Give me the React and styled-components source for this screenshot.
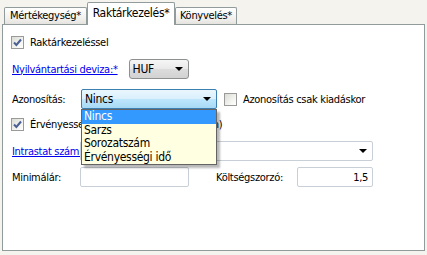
import React from 'react';
import styled, { createGlobalStyle } from 'styled-components';

const Global = createGlobalStyle`
  html, body { margin: 0; padding: 0; }
  body {
    background: #f4f3ee;
    font-family: "DejaVu Sans Condensed", "DejaVu Sans", sans-serif;
    font-size: 11px;
    letter-spacing: -0.3px;
    color: #000;
  }
`;

const Window = styled.div`
  width: 427px;
  height: 255px;
  box-sizing: border-box;
  padding: 0 2px;
  background: #f4f3ee;
  display: flex;
  flex-direction: column;
  overflow: hidden;
`;

const TabStrip = styled.div`
  height: 24px;
  display: flex;
  align-items: flex-end;
  padding-left: 2px;
  flex: none;
`;

const Tab = styled.div`
  box-sizing: border-box;
  width: ${p => p.$w}px;
  height: ${p => (p.$active ? 23 : 17)}px;
  margin-bottom: ${p => (p.$active ? -1 : 0)}px;
  position: relative;
  z-index: ${p => (p.$active ? 2 : 1)};
  padding-top: ${p => (p.$active ? 3 : 1)}px;
  text-align: center;
  border: 1px solid #919b9c;
  border-bottom: none;
  border-radius: 2px 2px 0 0;
  background: ${p => (p.$active ? '#fff' : 'linear-gradient(#ffffff, #f0efeb 70%, #e4e3de)')};
  font-size: ${p => (p.$active ? 12 : 11)}px;
  line-height: 14px;
  white-space: nowrap;
`;

const Panel = styled.div`
  box-sizing: border-box;
  height: 227px;
  border: 1px solid #919b9c;
  background: #fff;
  padding: 0 0 0 8px;
  display: flex;
  flex-direction: column;
`;

const Row = styled.div`
  display: flex;
  align-items: center;
  height: ${p => p.$h}px;
  margin-top: ${p => p.$top}px;
  flex: none;
`;

const Label = styled.span`
  box-sizing: border-box;
  width: ${p => p.$w}px;
  margin-left: ${p => p.$ml || 0}px;
  padding-left: 1px;
  white-space: nowrap;
  overflow: hidden;
  flex: none;
  color: #000;
`;

const LinkLabel = styled.a`
  box-sizing: border-box;
  width: ${p => (p.$w ? `${p.$w}px` : 'auto')};
  padding-left: 1px;
  margin-right: ${p => p.$mr || 0}px;
  color: #0000ee;
  text-decoration: underline;
  white-space: nowrap;
  overflow: hidden;
  flex: none;
  cursor: pointer;
`;

const CheckLabel = styled.label`
  display: flex;
  align-items: center;
  gap: 6px;
  white-space: nowrap;
  margin-left: ${p => p.$ml || 0}px;
`;

const Box = styled.span`
  box-sizing: border-box;
  width: 13px;
  height: 13px;
  border: 1px solid #9a9a9a;
  background: linear-gradient(135deg, #dcdcd6, #f6f6f3 70%, #ffffff);
  display: inline-flex;
  align-items: center;
  justify-content: center;
  flex: none;
`;

const Select = styled.div`
  box-sizing: border-box;
  width: ${p => p.$w}px;
  height: 20px;
  margin-left: ${p => p.$ml || 0}px;
  display: flex;
  align-items: center;
  padding: 0 5px 0 ${p => p.$pl || 3}px;
  flex: none;
  ${p =>
    p.$variant === 'button'
      ? `border: 1px solid #8e8f8f; border-radius: 3px; background: linear-gradient(#f6f6f6, #e9e9e9 50%, #dcdcdc 51%, #d2d2d2);`
      : p.$variant === 'focus'
      ? `border: 1px solid #3c7fb1; border-radius: 2px; background: linear-gradient(#eaf6fd, #d9f0fc 50%, #bee6fd 51%, #a7d9f5);`
      : `border: 1px solid #c9cfd6; border-radius: 2px; background: #fff;`}
`;

const SelectText = styled.span`
  flex: 1;
  white-space: nowrap;
  color: #000;
  font-size: ${p => p.$size || 11}px;
`;

const Arrow = styled.span`
  width: 0;
  height: 0;
  border-left: 4px solid transparent;
  border-right: 4px solid transparent;
  border-top: 4px solid #000;
  flex: none;
`;

const ComboWrap = styled.div`
  position: relative;
  flex: none;
`;

const DropList = styled.ul`
  position: absolute;
  top: 100%;
  left: 0;
  right: 0;
  margin: 0;
  padding: 0;
  list-style: none;
  box-sizing: border-box;
  border: 1px solid #646464;
  background: #ffffe1;
  box-shadow: 3px 3px 2px rgba(0, 0, 0, 0.28);
  z-index: 10;
`;

const DropItem = styled.li`
  height: 13.5px;
  line-height: 13px;
  padding-left: 2px;
  font-size: 12px;
  white-space: nowrap;
  background: ${p => (p.$sel ? '#3399ff' : 'transparent')};
  color: ${p => (p.$sel ? '#fff' : '#000')};
`;

const Input = styled.div`
  box-sizing: border-box;
  width: ${p => p.$w}px;
  height: 20px;
  border: 1px solid #c9cfd6;
  border-radius: 2px;
  background: #fff;
  padding: 0 4px;
  display: flex;
  align-items: center;
  justify-content: flex-end;
  flex: none;
`;

function Check({ checked }) {
  return (
    <Box>
      {checked && (
        <svg width="9" height="9" viewBox="0 0 9 9">
          <path d="M1 4.5 L3.4 7 L8 1.5" fill="none" stroke="#4b5f94" strokeWidth="2" />
        </svg>
      )}
    </Box>
  );
}

export default function App() {
  return (
    <>
      <Global />
      <Window>
        <TabStrip>
          <Tab $w={83}>Mértékegység*</Tab>
          <Tab $active $w={88}>Raktárkezelés*</Tab>
          <Tab $w={62}>Könyvelés*</Tab>
        </TabStrip>
        <Panel>
          <Row $top={8} $h={18}>
            <CheckLabel>
              <Check checked />
              Raktárkezeléssel
            </CheckLabel>
          </Row>
          <Row $top={8} $h={20}>
            <LinkLabel $mr={11}>Nyilvántartási deviza:*</LinkLabel>
            <Select $variant="button" $w={60}>
              <SelectText $size={12}>HUF</SelectText>
              <Arrow />
            </Select>
          </Row>
          <Row $top={10} $h={20}>
            <Label $w={70}>Azonosítás:</Label>
            <ComboWrap>
              <Select $variant="focus" $w={136}>
                <SelectText $size={12}>Nincs</SelectText>
                <Arrow />
              </Select>
              <DropList>
                <DropItem $sel>Nincs</DropItem>
                <DropItem>Sarzs</DropItem>
                <DropItem>Sorozatszám</DropItem>
                <DropItem>Érvényességi idő</DropItem>
              </DropList>
            </ComboWrap>
            <CheckLabel $ml={7}>
              <Check />
              Azonosítás csak kiadáskor
            </CheckLabel>
          </Row>
          <Row $top={6} $h={18}>
            <CheckLabel>
              <Check checked />
              Érvényességi idő figyelése (hónapokban)
            </CheckLabel>
          </Row>
          <Row $top={8} $h={20}>
            <LinkLabel $w={69}>Intrastat szám:</LinkLabel>
            <Select $w={293}>
              <SelectText />
              <Arrow />
            </Select>
          </Row>
          <Row $top={6} $h={20}>
            <Label $w={69}>Minimálár:</Label>
            <Input $w={109} />
            <Label $w={82} $ml={26}>Költségszorzó:</Label>
            <Input $w={76}>1,5</Input>
          </Row>
        </Panel>
      </Window>
    </>
  );
}
